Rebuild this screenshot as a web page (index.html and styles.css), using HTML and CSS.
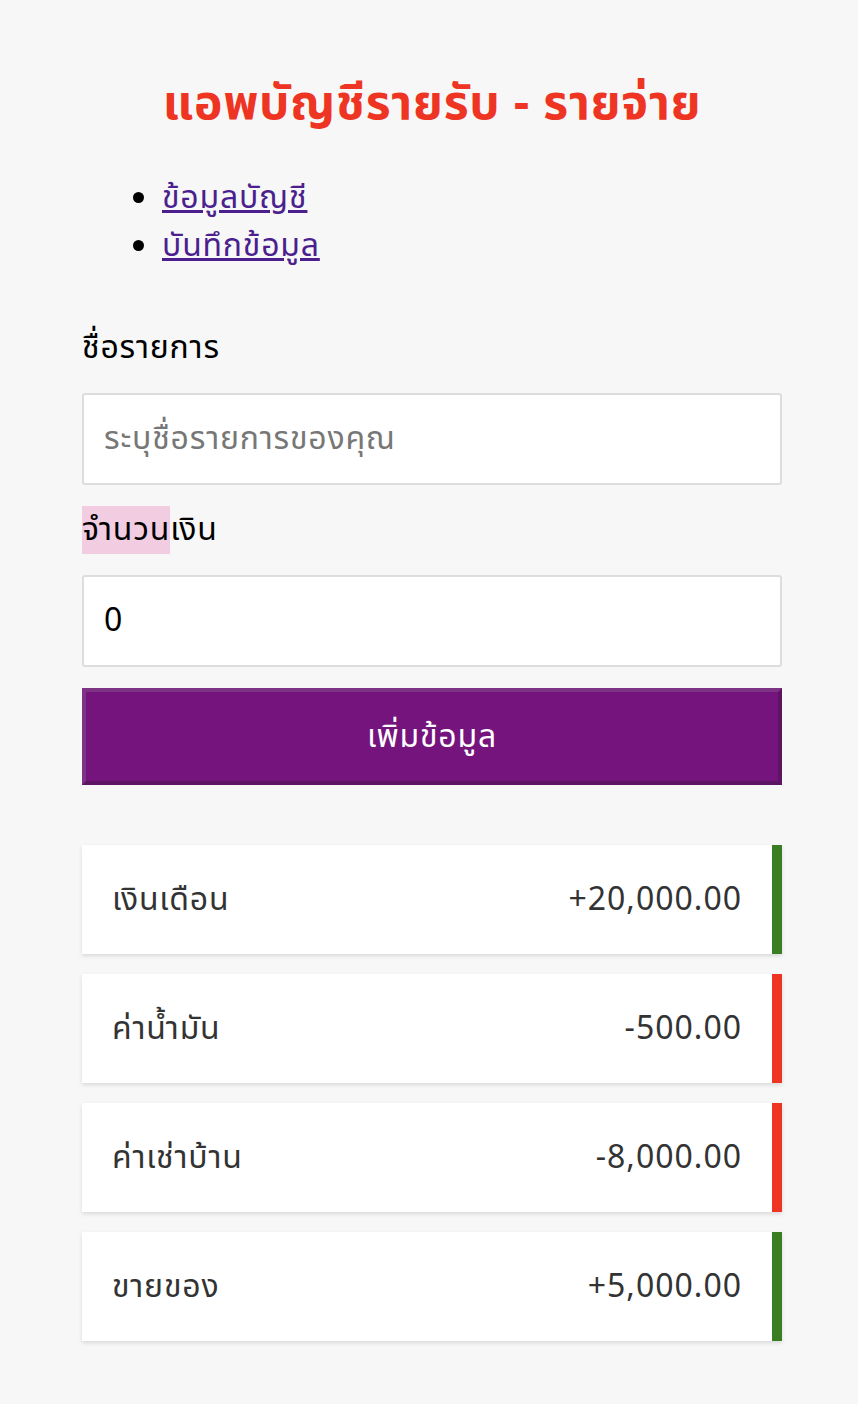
FILE: index.html
```html
<!DOCTYPE html>
<html lang="th">
<head>
<meta charset="utf-8">
<title>แอพบัญชีรายรับ - รายจ่าย</title>
<link rel="stylesheet" href="styles.css">
</head>
<body>
<div class="container">
  <h1 class="title">แอพบัญชีรายรับ - รายจ่าย</h1>
  <ul class="nav">
    <li><a href="#">ข้อมูลบัญชี</a></li>
    <li><a href="#">บันทึกข้อมูล</a></li>
  </ul>
  <form class="form">
    <label class="label">ชื่อรายการ</label>
    <input class="input" type="text" placeholder="ระบุชื่อรายการของคุณ">
    <label class="label"><span class="hl">จำนวน</span>เงิน</label>
    <input class="input num" type="text" value="0">
    <button class="btn" type="button">เพิ่มข้อมูล</button>
  </form>
  <ul class="items">
    <li class="item plus"><span>เงินเดือน</span><span class="amt">+20,000.00</span></li>
    <li class="item minus"><span>ค่าน้ำมัน</span><span class="amt">-500.00</span></li>
    <li class="item minus"><span>ค่าเช่าบ้าน</span><span class="amt">-8,000.00</span></li>
    <li class="item plus"><span>ขายของ</span><span class="amt">+5,000.00</span></li>
  </ul>
</div>
</body>
</html>
```
FILE: styles.css
```css
html, body {
  margin: 0;
  padding: 0;
  background: #f7f7f7;
}
body {
  font-family: "Noto Sans Thai", "Noto Sans Thai UI", "Noto Sans", "DejaVu Sans", sans-serif;
  font-size: 32px;
  letter-spacing: 0.8px;
  color: #000;
}
.container {
  width: 700px;
  margin: 0 0 0 82px;
  padding: 72px 0 40px;
}
.title {
  margin: 0;
  text-align: center;
  color: #ee3524;
  font-size: 48px;
  font-weight: bold;
  line-height: 66px;
}
.nav {
  margin: 36px 0 0;
  padding-left: 80px;
  line-height: 48px;
}
.nav a {
  color: #4b1f8e;
}
.form {
  display: flex;
  flex-direction: column;
  margin-top: 54px;
}
.label {
  line-height: 48px;
  margin-bottom: 21px;
}
.hl {
  background: #f2cce0;
}
.input {
  box-sizing: border-box;
  height: 92px;
  border: 2px solid #ddd;
  border-radius: 3px;
  background: #fff;
  padding: 0 20px;
  font: inherit;
  letter-spacing: inherit;
  color: #000;
  margin-bottom: 21px;
}
.input.num {
  letter-spacing: 0;
}
.input::placeholder {
  color: #777;
}
.btn {
  height: 97px;
  background: #75147c;
  color: #fff;
  font: inherit;
  letter-spacing: inherit;
  border: 4px solid;
  border-color: #7e3485 #5d1462 #5d1462 #7e3485;
}
.items {
  list-style: none;
  margin: 60px 0 0;
  padding: 0;
  display: flex;
  flex-direction: column;
  gap: 20px;
}
.item {
  box-sizing: border-box;
  height: 109px;
  background: #fff;
  display: flex;
  justify-content: space-between;
  align-items: center;
  padding: 0 30px;
  color: #333;
  box-shadow: 0 2px 4px rgba(0,0,0,0.12);
}
.amt {
  letter-spacing: 1px;
}
.item.plus { border-right: 10px solid #3a7d22; }
.item.minus { border-right: 10px solid #ee3524; }
```
